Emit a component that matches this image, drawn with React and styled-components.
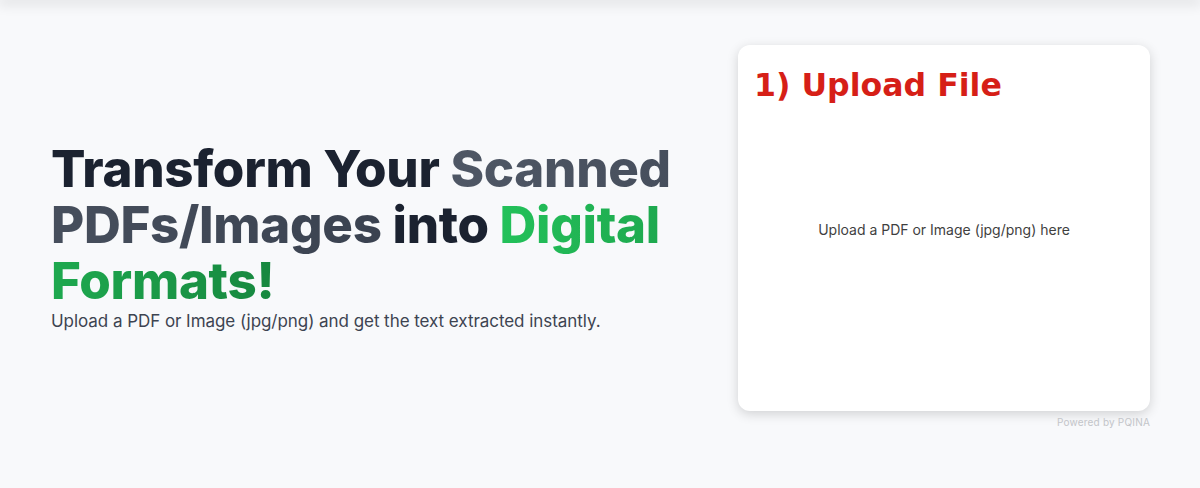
import styled, { createGlobalStyle } from 'styled-components';

const GlobalStyle = createGlobalStyle`
  html, body {
    margin: 0;
    padding: 0;
    background: #f8f9fb;
    font-family: Inter, "Liberation Sans", sans-serif;
  }
`;

const TopShadow = styled.div`
  height: 0;
  box-shadow: 0 0 14px 2px rgba(0, 0, 0, 0.24);
`;

const Page = styled.main`
  min-height: 488px;
  box-sizing: border-box;
`;

const Container = styled.div`
  max-width: 1100px;
  margin: 0 auto;
  padding-top: 45px;
  display: grid;
  grid-template-columns: 1fr 412px;
  column-gap: 64px;
  align-items: center;
`;

const Hero = styled.section`
  padding-left: 1px;
`;

const Heading = styled.h1`
  margin: 0;
  font-family: Inter, "Liberation Sans", sans-serif;
  font-weight: 800;
  font-size: 51px;
  line-height: 56px;
  letter-spacing: -0.3px;
  color: #1b2230;
`;

const Gradient = styled.span`
  background-image: linear-gradient(90deg, ${p => p.$from}, ${p => p.$to});
  -webkit-background-clip: text;
  background-clip: text;
  color: transparent;
`;

const Lead = styled.p`
  margin: 0;
  font-size: 17px;
  line-height: 24px;
  letter-spacing: -0.05px;
  color: #3d4451;
`;

const UploadColumn = styled.section`
  display: flex;
  flex-direction: column;
  align-items: flex-end;
`;

const Card = styled.div`
  width: 100%;
  height: 366px;
  box-sizing: border-box;
  background: #fff;
  border-radius: 12px;
  box-shadow: 0 3px 12px rgba(0, 0, 0, 0.16);
  display: flex;
  flex-direction: column;
  padding: 22px 16px 0;
`;

const CardTitle = styled.h2`
  margin: 0;
  font-family: "DejaVu Sans", Verdana, sans-serif;
  font-weight: 700;
  font-size: 31.6px;
  line-height: 36px;
  color: #d61f17;
`;

const DropLabel = styled.div`
  flex: 1;
  display: flex;
  justify-content: center;
  padding-top: 118px;
  font-family: Inter, "Liberation Sans", sans-serif;
  font-size: 14px;
  color: #3f3f3f;
`;

const Credits = styled.a`
  margin-top: 5px;
  font-size: 10px;
  color: #c3c5c9;
  text-decoration: none;
  letter-spacing: 0.2px;
`;

export default function App() {
  return (
    <>
      <GlobalStyle />
      <TopShadow />
      <Page>
        <Container>
          <Hero>
            <Heading>
              Transform Your{' '}
              <Gradient $from="#4f5765" $to="#3a4250">Scanned PDFs/Images</Gradient>{' '}
              into{' '}
              <Gradient $from="#23c15a" $to="#17873f">Digital Formats!</Gradient>
            </Heading>
            <Lead>Upload a PDF or Image (jpg/png) and get the text extracted instantly.</Lead>
          </Hero>
          <UploadColumn>
            <Card>
              <CardTitle>1) Upload File</CardTitle>
              <DropLabel>Upload a PDF or Image (jpg/png) here</DropLabel>
            </Card>
            <Credits href="#">Powered by PQINA</Credits>
          </UploadColumn>
        </Container>
      </Page>
    </>
  );
}
